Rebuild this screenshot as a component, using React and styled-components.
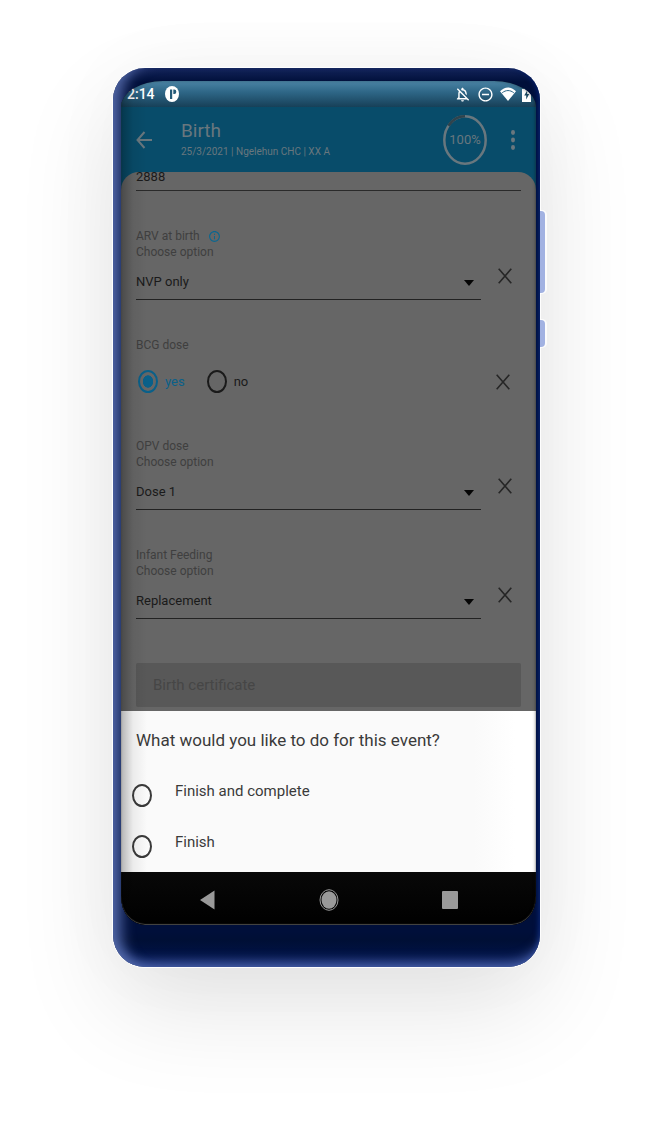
import React, { useState } from "react";
import styled, { createGlobalStyle } from "styled-components";
import { MdInfoOutline, MdOutlineNotificationsOff, MdRemoveCircleOutline } from "react-icons/md";

const GlobalStyle = createGlobalStyle`
  *, *::before, *::after { box-sizing: border-box; }
  body {
    margin: 0;
    background: #ffffff;
    font-family: Roboto, "Open Sans", sans-serif;
    font-size: 13px;
    line-height: 16px;
  }
  button, input, select { font: inherit; color: inherit; margin: 0; }
  button { border: 0; background: none; padding: 0; cursor: pointer; }
  svg { display: block; flex: none; }
`;

const Stage = styled.main`
  padding: 68px 117px 158px 113px;
  overflow: hidden;
`;

const Phone = styled.div`
  position: relative;
  max-width: 480px;
  margin: 0 auto;
  padding: 13px 4px 42px 8px;
  border-radius: 32px;
  background: linear-gradient(#14245a, #000f3a 14px, #000f3a 96%, #000f35 97%, #021550);
  box-shadow:
    0 0 0 1px rgba(255, 255, 255, 0.9),
    0 40px 100px rgba(0, 0, 0, 0.11),
    0 0 80px rgba(0, 0, 0, 0.03),
    inset 18px 0 14px -10px #5268a8,
    inset 0 -14px 12px -9px #4a62ab,
    inset -5px 0 5px -3px #06206a;
`;

const SideButton = styled.span`
  position: absolute;
  left: 100%;
  top: ${(p) => p.$top}px;
  width: 5px;
  height: ${(p) => p.$length}px;
  border-radius: 0 4px 4px 0;
  background: #a2b2e2;
  box-shadow: 1px 0 0 1px rgba(255, 255, 255, 0.8);
`;

const Screen = styled.div`
  position: relative;
  overflow: hidden;
  border-radius: 42px 42px 24px 24px / 26px 26px 28px 28px;
  background: #000000;

  &::after {
    content: "";
    position: absolute;
    inset: 0;
    border-radius: inherit;
    pointer-events: none;
    background: linear-gradient(to right, rgba(0, 0, 0, 0.28), rgba(0, 0, 0, 0.06) 12px, transparent 26px);
    box-shadow: inset 0 -1px 1px #4a4a48, inset -1px 0 3px rgba(0, 0, 0, 0.3);
  }
`;

const StatusBar = styled.div`
  display: flex;
  align-items: center;
  height: 26px;
  padding: 0 5px 0 6px;
  gap: 10px;
  color: #ffffff;
  background: linear-gradient(#4b84a5, #2d6585 45%, #174058);
`;

const Clock = styled.time`
  font-size: 14px;
  font-weight: 500;
`;

const StatusIcons = styled.div`
  display: flex;
  align-items: center;
  gap: 6px;
  margin-left: auto;
`;

const AppBar = styled.header`
  display: flex;
  align-items: center;
  height: 65px;
  padding: 0 17px 0 15px;
  color: #69777e;
  background: #084c6a;
`;

const Heading = styled.div`
  flex: 1;
  padding: 0 8px 0 29px;
  white-space: nowrap;
`;

const Title = styled.h1`
  margin: 0;
  font-size: 19px;
  font-weight: 400;
  line-height: 24px;
`;

const Subtitle = styled.p`
  margin: 0;
  font-size: 10px;
  line-height: 18px;
`;

const Progress = styled.div`
  display: grid;
  place-items: center;
  margin-right: 20px;
  font-size: 13px;

  > * { grid-area: 1 / 1; }
`;

const MenuButton = styled.button`
  padding: 4px;
`;

const FormBackdrop = styled.div`
  background: #084c6a;
`;

const Form = styled.form`
  padding: 0 15px 4px;
  overflow: hidden;
  border-radius: 18px 18px 0 0;
  background: #666666;
  color: #1a1a1a;
`;

const TextInput = styled.input`
  display: block;
  width: 100%;
  height: 27px;
  margin-top: -8px;
  padding: 0 0 2px;
  border: 0;
  border-bottom: 1px solid #2a2a2a;
  border-radius: 0;
  outline: 0;
  background: none;
  font-size: 13px;
`;

const Field = styled.div`
  padding-top: 37px;
`;

const Label = styled.label`
  display: flex;
  align-items: center;
  gap: 8px;
  color: #3f3f3f;
  font-size: 12px;

  svg { color: #0b6790; }
`;

const FieldRow = styled.div`
  display: grid;
  grid-template-columns: 1fr 40px;
`;

const SelectBox = styled.div`
  display: grid;
  align-items: center;
  border-bottom: 1px solid #222222;

  > * { grid-area: 1 / 1; }
  > svg { justify-self: end; margin: 6px 7px 0 0; pointer-events: none; }
`;

const Select = styled.select`
  appearance: none;
  height: 39px;
  padding: 5px 0 0;
  border: 0;
  border-radius: 0;
  outline: 0;
  background: none;
`;

const ClearButton = styled.button`
  display: grid;
  place-items: center;
  height: 32px;
  padding-left: ${(p) => (p.$inset ? 4 : 8)}px;
  color: #262626;
`;

const RadioRow = styled.div`
  display: grid;
  grid-template-columns: 1fr 40px;
  align-items: center;
  height: 48px;
  padding-top: 9px;
`;

const RadioGroup = styled.div`
  display: flex;
  gap: 22px;
  padding-left: 2px;
`;

const RadioLabel = styled.label`
  display: flex;
  align-items: center;
  gap: 7px;
  color: ${(p) => (p.$active ? "#0a6089" : "#1a1a1a")};
`;

const Radio = styled.input`
  appearance: none;
  flex: none;
  width: 20px;
  height: 23px;
  border: 2px solid currentColor;
  border-radius: 50%;
  cursor: pointer;

  &:checked { background: radial-gradient(closest-side, currentColor 62%, transparent 68%); }
`;

const CertificateButton = styled.button`
  display: block;
  width: 100%;
  height: 44px;
  margin-top: 44px;
  padding-left: 17px;
  border-radius: 2px;
  background: #585858;
  color: #464646;
  font-size: 15px;
  text-align: left;
`;

const Sheet = styled.section`
  padding: 17px 15px 0 11px;
  background: linear-gradient(to right, #fafafa 85%, #ffffff 95%);
  color: #3a3a3a;
`;

const SheetTitle = styled.h2`
  margin: 0 0 18px 4px;
  font-size: 17px;
  font-weight: 400;
  line-height: 24px;
`;

const SheetOption = styled.label`
  display: flex;
  align-items: center;
  gap: 23px;
  height: 51px;
  font-size: 15px;
  cursor: pointer;

  span { padding-bottom: 9px; }
`;

const NavBar = styled.nav`
  display: flex;
  justify-content: space-between;
  align-items: center;
  height: 53px;
  padding: 3px 75px 0;
  color: #999999;
  background: linear-gradient(#080808, #000000);
`;

const Cross = () => (
  <svg width="14" height="16" viewBox="0 0 14 16" stroke="currentColor" strokeWidth="1.6">
    <path d="M.7.8l12.6 14.4M13.3.8L.7 15.2" />
  </svg>
);

function SelectField({ id, label, info, options }) {
  const [value, setValue] = useState(options[0]);
  return (
    <Field>
      <Label htmlFor={id}>
        {label}
        {info && <MdInfoOutline size={13} />}
      </Label>
      <Label as="div">Choose option</Label>
      <FieldRow>
        <SelectBox>
          <Select id={id} value={value} onChange={(e) => setValue(e.target.value)}>
            {options.map((o) => <option key={o}>{o}</option>)}
          </Select>
          <svg width="10" height="6" viewBox="0 0 10 6"><path d="M0 0h10L5 6z" fill="#050505" /></svg>
        </SelectBox>
        <ClearButton type="button" aria-label={`Clear ${label}`}><Cross /></ClearButton>
      </FieldRow>
    </Field>
  );
}

export default function App() {
  const [bcg, setBcg] = useState("yes");
  return (
    <>
      <GlobalStyle />
      <Stage>
        <Phone>
          <SideButton $top={143} $length={82} />
          <SideButton $top={252} $length={27} />
          <Screen>
            <StatusBar>
              <Clock>2:14</Clock>
              <svg width="14" height="16" viewBox="0 0 14 16">
                <ellipse cx="7" cy="8" rx="7" ry="8" fill="#fff" />
                <path d="M5 3.5h2.2v9.500H5z" fill="#255b78" />
                <path d="M8.300 3.500h1a2 2.200 0 010 4.400h-1z" fill="#255b78" />
              </svg>
              <StatusIcons>
                <MdOutlineNotificationsOff size={17} />
                <MdRemoveCircleOutline size={17} />
                <svg width="16" height="14" viewBox="0 0 16 14">
                  <path d="M0 4.2C4.8-.9 11.2-.9 16 4.2L8 14z" fill="#fff" />
                  <path d="M2.2 5.8c3.600-3 8-3 11.600 0" fill="none" stroke="#2d6585" strokeWidth="1" />
                </svg>
                <svg width="9" height="15" viewBox="0 0 9 15">
                  <path d="M0 2h2.500V0h4v2H9v13H0z" fill="#fff" />
                  <path d="M5.200 3.500L2.200 8.500h2v4l3-5.500h-2z" fill="#1c4a63" />
                </svg>
              </StatusIcons>
            </StatusBar>

            <AppBar>
              <button type="button" aria-label="Back">
                <svg width="16" height="18" viewBox="0 0 16 18" fill="none" stroke="currentColor" strokeWidth="2">
                  <path d="M16 9H1.500M8.500 1L1.500 9l7 8" />
                </svg>
              </button>
              <Heading>
                <Title>Birth</Title>
                <Subtitle>25/3/2021 | Ngelehun CHC | XX A</Subtitle>
              </Heading>
              <Progress>
                <svg width="44" height="50" viewBox="0 0 44 50" fill="none" strokeWidth="2.500">
                  <ellipse cx="22" cy="25" rx="20.700" ry="23.700" stroke="#69777e" />
                  <path d="M5.500 10.700A20.700 23.700 0 0122 1.300" stroke="#2f434d" />
                </svg>
                <span>100%</span>
              </Progress>
              <MenuButton type="button" aria-label="More options">
                <svg width="4" height="20" viewBox="0 0 4 20" fill="currentColor">
                  <ellipse cx="2" cy="2.500" rx="2" ry="2.400" />
                  <ellipse cx="2" cy="10" rx="2" ry="2.400" />
                  <ellipse cx="2" cy="17.500" rx="2" ry="2.400" />
                </svg>
              </MenuButton>
            </AppBar>

            <FormBackdrop>
              <Form onSubmit={(e) => e.preventDefault()}>
                <TextInput aria-label="Weight (g)" defaultValue="2888" />
                <SelectField id="arv" label="ARV at birth" info options={["NVP only"]} />
                <Field role="radiogroup" aria-label="BCG dose">
                  <Label as="div">BCG dose</Label>
                  <RadioRow>
                    <RadioGroup>
                      {["yes", "no"].map((v) => (
                        <RadioLabel key={v} $active={bcg === v}>
                          <Radio type="radio" name="bcg" checked={bcg === v} onChange={() => setBcg(v)} />
                          {v}
                        </RadioLabel>
                      ))}
                    </RadioGroup>
                    <ClearButton type="button" $inset aria-label="Clear BCG dose" onClick={() => setBcg(null)}>
                      <Cross />
                    </ClearButton>
                  </RadioRow>
                </Field>
                <SelectField id="opv" label="OPV dose" options={["Dose 1"]} />
                <SelectField id="feeding" label="Infant Feeding" options={["Replacement"]} />
                <CertificateButton type="button">Birth certificate</CertificateButton>
              </Form>
            </FormBackdrop>

            <Sheet>
              <SheetTitle>What would you like to do for this event?</SheetTitle>
              <SheetOption>
                <Radio type="radio" name="action" value="complete" />
                <span>Finish and complete</span>
              </SheetOption>
              <SheetOption>
                <Radio type="radio" name="action" value="finish" />
                <span>Finish</span>
              </SheetOption>
            </Sheet>

            <NavBar>
              <button type="button" aria-label="Navigate back">
                <svg width="20" height="20" viewBox="0 0 20 20"><path d="M4 10L18.500.500v19z" fill="currentColor" /></svg>
              </button>
              <button type="button" aria-label="Home">
                <svg width="20" height="22" viewBox="0 0 20 22">
                  <ellipse cx="10" cy="11" rx="9" ry="10.300" fill="none" stroke="currentColor" />
                  <ellipse cx="10" cy="11" rx="7.500" ry="8.800" fill="currentColor" />
                </svg>
              </button>
              <button type="button" aria-label="Recent apps">
                <svg width="20" height="20" viewBox="0 0 20 20"><rect x="1" y="1" width="16" height="18" rx="1" fill="currentColor" /></svg>
              </button>
            </NavBar>
          </Screen>
        </Phone>
      </Stage>
    </>
  );
}
